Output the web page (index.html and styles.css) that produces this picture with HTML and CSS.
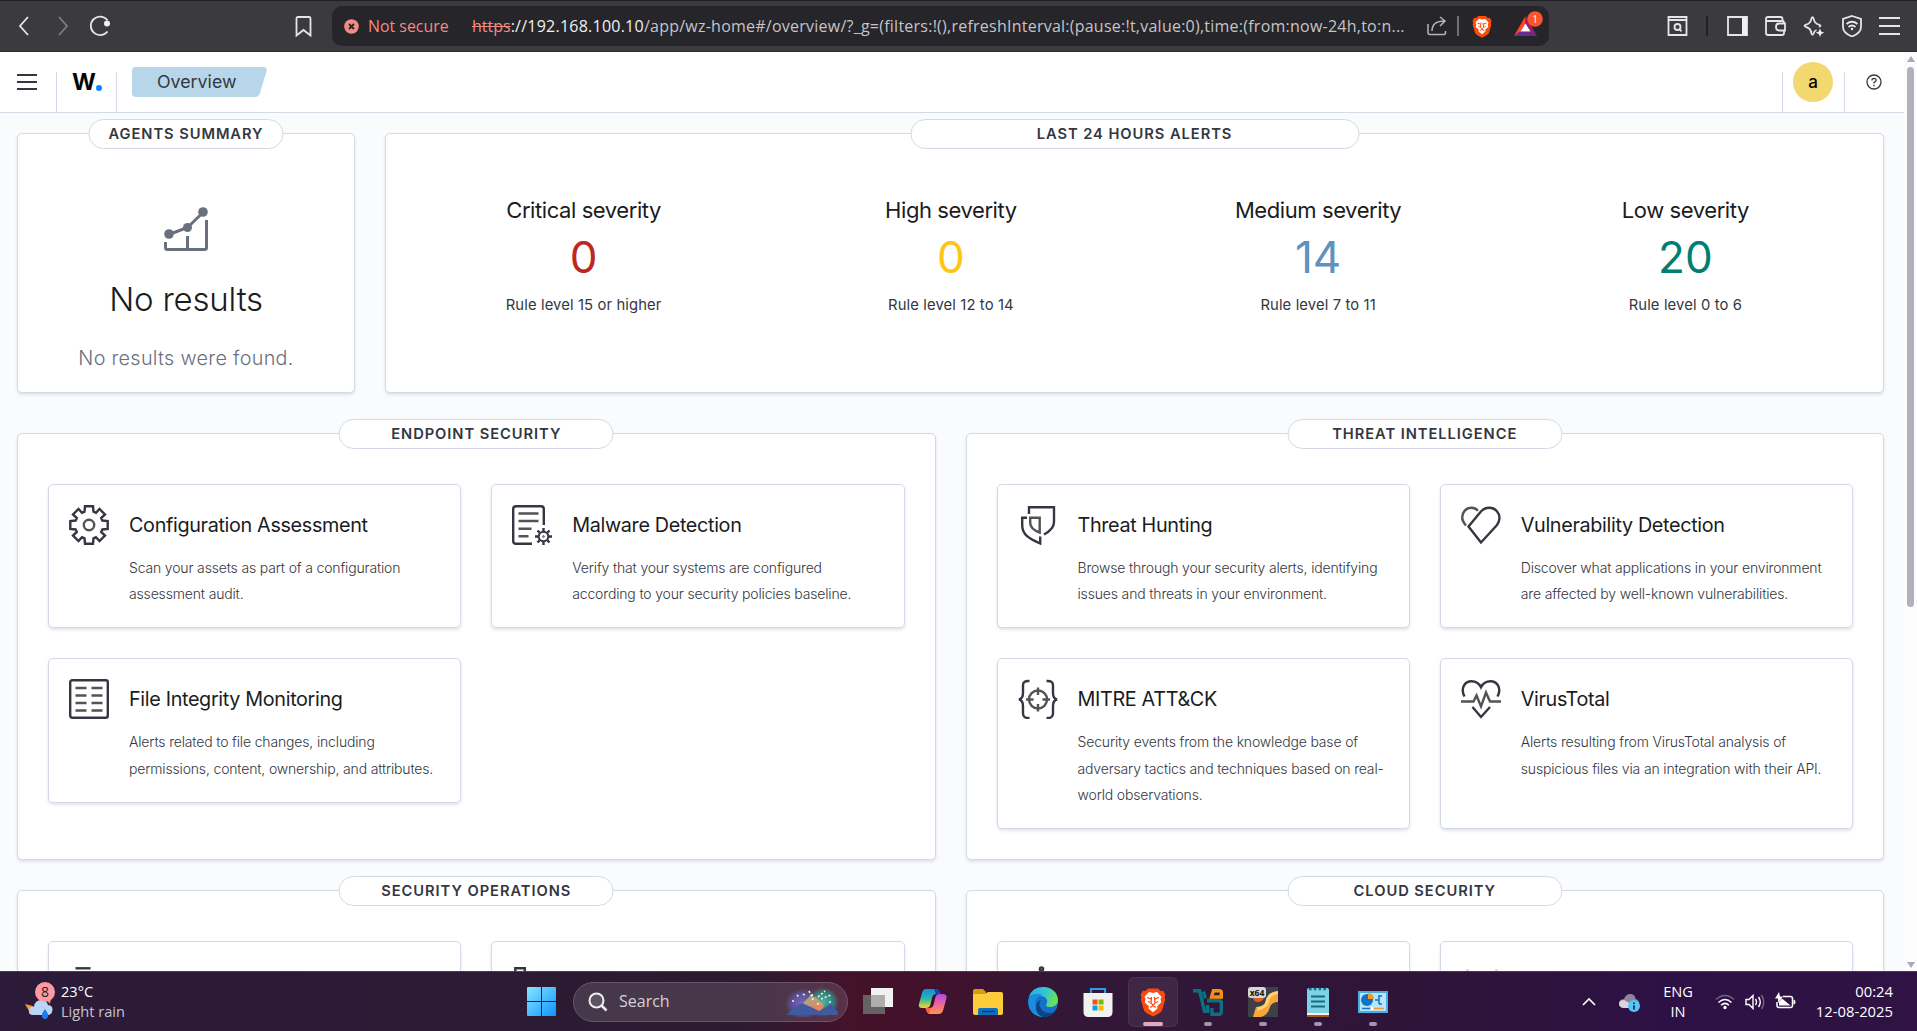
FILE: index.html
```html
<!DOCTYPE html>
<html lang="en">
<head>
<meta charset="utf-8">
<title>Overview</title>
<link rel="stylesheet" href="styles.css">
</head>
<body>
<svg class="defs" aria-hidden="true">
  <symbol id="brave" viewBox="0 0 26 29">
    <path fill="#fb4b0c" d="M8 1h10l2.500 2.600 2.700-.4L25.300 7l-.7 3 .6 2-3 10.300c-.6 1.800-2 2.700-3.400 3.700L13 29l-5.800-3C5.800 25 4.400 24 3.800 22.300L.8 12l.6-2-.7-3 2.100-3.800 2.700.4z"/>
    <path fill="#fff" d="M9 4.500l4 1 4-1 4.500 4.800-1 2.500.8 3-4.100 4 .3 2.200-4.500 3.700L8.500 21l.3-2.200-4.100-4 .8-3-1-2.500z"/>
    <path fill="none" stroke="#fb4b0c" stroke-width="1.300" d="M7 10l4 1.400M19 10l-4 1.400M11.500 9.500L11 16l2 1.200 2-1.200-.5-6.500M8 14l2 1M18 14l-2 1M10 20l3-1.800 3 1.800"/>
  </symbol>
</svg>

<header class="toolbar">
  <svg class="tb back" width="12" height="20" viewBox="0 0 12 20"><path d="M10 1L2 10l8 9"/></svg>
  <svg class="tb fwd" width="12" height="20" viewBox="0 0 12 20"><path d="M2 1l8 9-8 9"/></svg>
  <svg class="tb reload" width="23" height="22" viewBox="0 0 23 22"><path d="M18.500 16.500A9.300 9.300 0 1 1 18.500 5.200"/><circle cx="18" cy="8.500" r="3" class="solid"/></svg>
  <svg class="tb mark" width="17" height="21" viewBox="0 0 17 21"><path d="M1.500 19.500V2.500q0-1.500 1.500-1.500h11q1.500 0 1.500 1.500v17L8.500 14z"/></svg>
  <div class="urlbar">
    <svg class="warn" width="15" height="15" viewBox="0 0 15 15"><circle cx="7.500" cy="7.500" r="7.300" fill="#f28b82"/><path d="M5 5l5 5M10 5l-5 5" stroke="#26252a" stroke-width="1.800"/></svg>
    <span class="insecure">Not secure</span>
    <span class="url"><s>https</s>://192.168.100.10<span class="path">/app/wz-home#/overview/?_g=(filters:!(),refreshInterval:(pause:!t,value:0),time:(from:now-24h,to:n...</span></span>
    <svg class="tb share" width="20" height="20" viewBox="0 0 20 20"><path d="M1 8v8.500q0 2 2 2h14q1.500 0 1.500-2V15M5 15C5 8 9 5 17.500 5M13 1l5 4-5 5"/></svg>
    <i class="sep"></i>
    <svg class="lion" width="20" height="23"><use href="#brave"/></svg>
    <svg class="bat" width="32" height="26" viewBox="0 0 32 26"><path fill="#ff4724" d="M11.500 5L0 25l7-4.500 4.500-7z"/><path fill="#9e1f63" d="M11.500 5L23 25l-7-4.500-4.500-7z"/><path fill="#662d91" d="M0 25h23l-6-4.500H6z"/><path fill="#fff" d="M11.500 12.500l5 8h-10z"/><circle cx="21" cy="8" r="7.800" fill="#fb542b"/><text x="21" y="11.500" fill="#fff" text-anchor="middle" font-size="10">1</text></svg>
  </div>
  <div class="tools">
    <svg class="tb" width="21" height="20" viewBox="0 0 21 20"><path d="M1.500 1h18v18h-18zM1.500 4h18"/><circle cx="10.500" cy="11" r="3"/><path d="M12.500 13l2 2.300"/></svg>
    <i class="sep dark"></i>
    <svg class="tb" width="21" height="20" viewBox="0 0 21 20"><path d="M1 1h19v18H1z"/><path class="solid" d="M15 1h5v18h-5z"/></svg>
    <svg class="tb" width="21" height="20" viewBox="0 0 21 20"><path d="M17.500 5V3q0-2-2-2H3Q1 1 1 3v14q0 2 2 2h14q2 0 2-2v-2M1 5h16.500q1.500 0 1.500 2M20 7.500h-6q-3 0-3 3.500t3 3.500h6z"/></svg>
    <svg class="tb" width="22" height="21" viewBox="0 0 22 21"><path d="M13.500 14Q11 15 10.600 17.500 9.500 20 8.400 17.500 7.800 12 3 11 0 9.800 3 8.600 7.800 7.500 8.400 2.500 9.500 0 10.600 2.500 11.300 7.500 16 8.600 19 9.800 16 11"/><path class="solid" d="M17 12.500l1.200 3 3 1.200-3 1.200-1.200 3-1.200-3-3-1.200 3-1.200z"/></svg>
    <svg class="tb" width="20" height="22" viewBox="0 0 20 22"><path d="M10 1l9 3v8c0 5-4 7.500-9 9.500-5-2-9-4.500-9-9.500V4zM4.500 9q5.500-4.500 11 0M6.500 12q3.500-3 7 0"/><circle class="solid" cx="10" cy="14" r="1.200"/></svg>
    <svg class="tb" width="21" height="18" viewBox="0 0 21 18"><path d="M0 1h21M0 9h21M0 17h21"/></svg>
  </div>
</header>

<div class="viewport">
  <div class="app">
    <nav class="nav">
      <button class="burger"><i></i><i></i><i></i></button>
      <div class="logo">W<b></b></div>
      <div class="crumb"><svg width="135" height="30" viewBox="0 0 135 30"><path fill="#b8d6e9" d="M4 0h127q4.500 0 3.500 4l-6.500 22q-1.200 4-5 4H4q-4 0-4-4V4q0-4 4-4z"/></svg><span>Overview</span></div>
      <div class="user"><span class="avatar">a</span></div>
      <div class="help"><svg width="16" height="16" viewBox="0 0 16 16"><circle cx="8" cy="8" r="7"/><path d="M5.900 6.500Q6 4.300 8 4.300t2.100 1.900Q10.100 7.300 8 8.300v1.300M8 10.800v1.400"/></svg></div>
    </nav>

    <main class="content">
      <div class="row summary">
        <section class="panel agents">
          <h2 class="pill">AGENTS SUMMARY</h2>
          <svg class="chart" width="44" height="44" viewBox="0 0 44 44"><path d="M5 27.500L23.500 20.500 39.500 5M1.500 35v5.500q0 2 2 2h37q2 0 2-2V13M23.500 29v13"/><circle cx="5" cy="27" r="4.800"/><circle cx="23.500" cy="20.500" r="4.500"/><circle cx="39" cy="5" r="4.800"/></svg>
          <p class="empty-title">No results</p>
          <p class="empty-text">No results were found.</p>
        </section>
        <section class="panel alerts">
          <h2 class="pill wide">LAST 24 HOURS ALERTS</h2>
          <div class="stat"><p>Critical severity</p><strong class="critical">0</strong><small>Rule level 15 or higher</small></div>
          <div class="stat"><p>High severity</p><strong class="high">0</strong><small>Rule level 12 to 14</small></div>
          <div class="stat"><p>Medium severity</p><strong class="medium">14</strong><small>Rule level 7 to 11</small></div>
          <div class="stat"><p>Low severity</p><strong class="low">20</strong><small>Rule level 0 to 6</small></div>
        </section>
      </div>

      <div class="row halves">
        <section class="panel group">
          <h2 class="pill wide">ENDPOINT SECURITY</h2>
          <article class="card">
            <svg class="ico" viewBox="0 0 40 40"><path d="M16 1.300H24L24.500 6.600 27 7.800 30.500 4 36 9.500 32.200 13 33.400 15.500 38.700 16V24L33.400 24.500 32.200 27 36 30.500 30.500 36 27 32.200 24.500 33.400 24 38.700H16L15.500 33.400 13 32.200 9.500 36 4 30.500 7.800 27 6.600 24.500 1.300 24V16L6.600 15.500 7.800 13 4 9.500 9.500 4 13 7.800 15.500 6.600z"/><circle cx="20" cy="20" r="5.200" class="alt"/></svg>
            <div><h3>Configuration Assessment</h3><p>Scan your assets as part of a configuration<br>assessment audit.</p></div>
          </article>
          <article class="card">
            <svg class="ico" viewBox="0 0 40 40"><path d="M20 38.800H4q-2.800 0-2.800-2.800V4Q1.200 1.200 4 1.200h25q2.800 0 2.800 2.800V20"/><path class="alt" d="M6.500 8.500h20M6.500 16h20M6.500 23.700h13M6.500 31.200h10"/><circle cx="31.500" cy="31.500" r="4.800" stroke-width="2"/><circle cx="31.500" cy="31.500" r=".8" stroke-width="1"/><path d="M31.500 23v3M31.500 37v3M23 31.500h3M37 31.500h3M25.500 25.500l2.100 2.100M35.400 35.400l2.100 2.100M25.500 37.500l2.100-2.100M35.400 27.600l2.100-2.100"/></svg>
            <div><h3>Malware Detection</h3><p>Verify that your systems are configured<br>according to your security policies baseline.</p></div>
          </article>
          <article class="card">
            <svg class="ico" viewBox="0 0 40 40"><rect x="1.200" y="1.200" width="37.600" height="37.600" rx="2"/><path class="alt" d="M6.500 9h11M22.500 9h11M6.500 16.500h11M22.500 16.500h11M6.500 24h11M22.500 24h11M6.500 31.500h11M22.500 31.500h11"/></svg>
            <div><h3>File Integrity Monitoring</h3><p>Alerts related to file changes, including<br>permissions, content, ownership, and attributes.</p></div>
          </article>
        </section>
        <section class="panel group">
          <h2 class="pill wide">THREAT INTELLIGENCE</h2>
          <article class="card">
            <svg class="ico" viewBox="0 0 40 40"><path d="M11 9V2.200H36V17q0 7-10 12.500M9 12.700H4.200V20c0 10 7 13.500 18 18.500v-7"/><path class="alt" d="M12.200 12.700h9.500V27.500Q12.200 24 12.200 18z"/></svg>
            <div><h3>Threat Hunting</h3><p>Browse through your security alerts, identifying<br>issues and threats in your environment.</p></div>
          </article>
          <article class="card">
            <svg class="ico" viewBox="0 0 40 40"><path d="M20 37.500L7.500 21.500 19.500 7C22 4 25 2.800 28.500 2.800 34.500 2.800 38.500 8 38.500 13c0 2.500-.8 4.500-2.500 7z"/><path class="alt" d="M5 20.500C2 17 1.200 15 1.200 12.500 1.200 7 5 2.800 10.500 2.800q4 0 6.500 3"/></svg>
            <div><h3>Vulnerability Detection</h3><p>Discover what applications in your environment<br>are affected by well-known vulnerabilities.</p></div>
          </article>
          <article class="card">
            <svg class="ico" viewBox="0 0 40 40"><path d="M11.500 2Q5 1.500 5 6v8q0 5.500-4 6.500 4 1 4 6.500v7.500q0 5 6.500 4.500M28.500 2Q35 1.500 35 6v8q0 5.500 4 6.500-4 1-4 6.500v7.500q0 5-6.500 4.500"/><circle class="alt" cx="20" cy="20.500" r="9"/><path class="alt" d="M20 8.500v7.500M20 25v7.500M8 20.500h7.500M24.500 20.500H32"/></svg>
            <div><h3>MITRE ATT&amp;CK</h3><p>Security events from the knowledge base of<br>adversary tactics and techniques based on real-<br>world observations.</p></div>
          </article>
          <article class="card">
            <svg class="ico" viewBox="0 0 40 40"><path d="M3.500 17.500C-1 9 4 2.200 10.500 2.200c5 0 7.500 2 9.500 6 2-4 4.500-6 9.500-6C36 2.200 41 9 36.500 17.500M11.500 28l8.500 10 9-10"/><path class="alt" d="M0 22.500h12.500l3-6 4.500 11 5-14 4 9H40"/></svg>
            <div><h3>VirusTotal</h3><p>Alerts resulting from VirusTotal analysis of<br>suspicious files via an integration with their API.</p></div>
          </article>
        </section>
      </div>

      <div class="row halves next">
        <section class="panel group">
          <h2 class="pill wide">SECURITY OPERATIONS</h2>
          <article class="card"><svg class="ico" viewBox="0 0 40 40"><path d="M6.500 6.300h15"/></svg></article>
          <article class="card"><svg class="ico" viewBox="0 0 40 40"><path d="M3.300 14V6.300h9.500V14"/></svg></article>
        </section>
        <section class="panel group">
          <h2 class="pill wide">CLOUD SECURITY</h2>
          <article class="card"><svg class="ico" viewBox="0 0 40 40"><circle cx="23.500" cy="7" r="1.600"/><path d="M23.500 9v6"/></svg></article>
          <article class="card"><svg class="ico faint" viewBox="0 0 40 40"><path d="M5 8.500h3M34 8.500h3"/></svg></article>
        </section>
      </div>
    </main>
  </div>
  <div class="scroll"><i class="up"></i><i class="thumb"></i><i class="down"></i></div>
</div>

<footer class="taskbar">
  <div class="weather">
    <svg width="34" height="38" viewBox="0 0 34 38"><path fill="#f39c2d" d="M0 22l8 2-4 5zM20 16h6l-1 6z"/><path fill="#b9d4f7" d="M8 33q-5 0-4-5 1-3.500 5-3.500 1-6.500 7-6.500 5.500 0 7 5 5 .5 4.500 5-.5 5-5 5z"/><path fill="#1f7bea" d="M20 27q4 5 3 8-3 4.500-6 0-1-3 3-8z"/><circle cx="20" cy="10" r="10" fill="#ff99a4"/><text x="20" y="15" text-anchor="middle" font-size="14" fill="#222">8</text></svg>
    <div>23°C<br><span>Light rain</span></div>
  </div>
  <svg class="win" width="29" height="29" viewBox="0 0 29 29"><defs><linearGradient id="wg" x2="1" y2="1"><stop stop-color="#8ae4ff"/><stop offset="1" stop-color="#0a95ff"/></linearGradient></defs><path fill="url(#wg)" d="M1 0h13v14H0V1q0-1 1-1zM15 0h13q1 0 1 1v13H15zM0 15h14v14H1q-1 0-1-1zM15 15h14v13q0 1-1 1H15z"/></svg>
  <div class="search">
    <svg width="20" height="20" viewBox="0 0 20 20"><circle cx="8.500" cy="8.500" r="7" fill="#ffffff22" stroke="#eee" stroke-width="2"/><path d="M13.500 13.500l5 5" stroke="#eee" stroke-width="2.500"/></svg>
    <span>Search</span>
    <svg class="fw" width="54" height="30" viewBox="0 0 54 30"><defs><radialGradient id="f1"><stop stop-color="#7f68b8"/><stop offset=".6" stop-color="#5b529c"/><stop offset="1" stop-color="#5b529c" stop-opacity="0"/></radialGradient><radialGradient id="f2"><stop stop-color="#4bb3a0"/><stop offset=".6" stop-color="#318481"/><stop offset="1" stop-color="#318481" stop-opacity="0"/></radialGradient></defs><ellipse cx="18" cy="17" rx="18" ry="16" fill="url(#f1)"/><ellipse cx="38" cy="15" rx="16" ry="15" fill="url(#f2)"/><path fill="#b99c7e" d="M8 23l9-6 8-8 6 1 8 8-5 6z"/><path fill="#ee8254" d="M25 19l14 0-5 9z"/><path d="M24 4l3 6M18 7l3 2M33 10l7-6M36 12l10-4M28 13l-1-6M32 17l4-1M12 8l2 2M7 14h3M44 15h3" stroke="#fff1cf" stroke-width="1.700" stroke-dasharray="2 2"/><path fill="#3f5a9d" d="M1 28l8-7 8-5 9 4 8 4 12-7 7 8v3z"/></svg>
  </div>
  <div class="apps">
    <span class="app-btn"><svg width="30" height="30" viewBox="0 0 30 30"><path fill="#666163" d="M0 8h22v19H0z"/><path fill="#f2f2f2" d="M8 1h22v19H8z"/><path fill="#b0adae" d="M8 8h14v12H8z"/></svg></span>
    <span class="app-btn"><svg width="30" height="30" viewBox="0 0 30 30"><defs><linearGradient id="c1" y2="1" x2="0"><stop stop-color="#168be8"/><stop offset=".5" stop-color="#28b8a8"/><stop offset="1" stop-color="#ffd12f"/></linearGradient><linearGradient id="c2" y2="1" x2="0"><stop stop-color="#a44bea"/><stop offset=".5" stop-color="#f0659b"/><stop offset="1" stop-color="#ff9350"/></linearGradient></defs><path fill="url(#c1)" d="M8 2h10q3 0 4 5h-4q-3 0-4 4l-2 8q-1 2-4 2H4q-4 0-3-4L4 6q1-4 4-4z"/><path fill="url(#c2)" d="M21 7h4q4 0 3.500 4l-3 11q-1 5-5 5H12q-3 0-4.500-6h4q3 0 4-3l2-8q1-3 3.500-3z"/><path fill="#123fba" d="M16 2h2q3 0 4 5h-4z"/><path fill="#ff5a32" d="M7.500 21h5l-1.500 6q-2-1-3.500-6z"/></svg></span>
    <span class="app-btn"><svg width="30" height="30" viewBox="0 0 30 30"><path fill="#dc9a08" d="M0 4q0-2 2-2h8l3 3v4H0z"/><path fill="#fdcc3b" d="M0 7h12l3-2h13q2 0 2 2v19q0 2-2 2H2q-2 0-2-2z"/><path fill="#0f6fc0" d="M5 28v-5q0-2 2-2h16q2 0 2 2v5z"/><path stroke="#073f7d" stroke-width="1.500" d="M9 24.500h13"/></svg></span>
    <span class="app-btn"><svg width="30" height="30" viewBox="0 0 30 30"><defs><linearGradient id="e1" x2="1" y2=".3"><stop stop-color="#2aa9ea"/><stop offset=".6" stop-color="#33c7cf"/><stop offset="1" stop-color="#68e05a"/></linearGradient></defs><circle cx="15" cy="15" r="15" fill="#1470c8"/><path fill="url(#e1)" d="M1 10Q4 0 15 0c9 0 15 6 15 13 0 5-4 7-8 7-5 0-4-2-3-4 1-4-2-7-6-7-5 0-9 1-12 1z"/><path fill="#1b8ddf" d="M1 10c3-4 11-4 14-2-6 1-9 6-7 12 1 5 4 8 7 10C5 30-2 21 1 10z"/><path fill="#0c4386" d="M13 13c-4 4 0 13 8 13 4 0 6-1 7-3-3 6-8 7-13 7-9-3-9-15-2-17z"/></svg></span>
    <span class="app-btn"><svg width="30" height="30" viewBox="0 0 30 30"><path fill="none" stroke="#2d9be2" stroke-width="2.200" d="M8 7V2h14v5"/><path fill="#f1f1f1" d="M.5 6h29v19q0 5-5 5h-19q-5 0-5-5z"/><path fill="#f25022" d="M9.500 12.500h5v5h-5z"/><path fill="#7fba00" d="M15.500 12.500h5v5h-5z"/><path fill="#00a4ef" d="M9.500 18.500h5v5h-5z"/><path fill="#ffb900" d="M15.500 18.500h5v5h-5z"/></svg></span>
    <span class="app-btn active"><svg width="26" height="30"><use href="#brave"/></svg></span>
    <span class="app-btn run"><svg width="30" height="28" viewBox="0 0 30 28" fill="none" stroke-width="3.400"><path stroke="#0b7082" d="M0 2.700h6.500l5 20.500h3.200V17M10.500 3.500l2 7M14 12.700h12q2.300 0 2.300 2v9.500q0 2-2.300 2H19V20"/><path stroke="#f29111" d="M20.500 2.700h5.800q2 0 2 2V9H18.500z"/></svg></span>
    <span class="app-btn run"><svg width="30" height="30" viewBox="0 0 30 30"><path fill="#3d4046" d="M0 0h30v30H0z"/><path fill="#f7a63b" d="M30 4v11q-6 0-8 5-2 8-9 10H5l3-10q9 0 10-7 2-8 12-9z"/><path fill="#ffd375" d="M30 4v3q-8 1-9 8-1 6-12 9l1-4q7 0 8-7 2-8 12-9z"/><path fill="#e85d1e" d="M5 11h11q-2 4-6 4t-5-4z"/><rect width="18" height="11" rx="3" fill="#d6d6d6"/><text x="9" y="9" font-size="8.500" font-weight="700" text-anchor="middle" fill="#111">x64</text></svg></span>
    <span class="app-btn run"><svg width="22" height="30" viewBox="0 0 22 30"><path fill="#7fd2e3" d="M0 3q0-2 2-2h18q2 0 2 2v23H0z"/><path fill="#f4f4f4" d="M0 26h22v2H0z"/><path fill="#a4581c" d="M0 28h22v2H0z"/><path stroke="#136c86" stroke-width="2" d="M4 9.500h14M4 14.500h14M4 19.500h14"/><path stroke="#136c86" stroke-width="2.500" stroke-dasharray="2.500 2.300" d="M2 2h19"/></svg></span>
    <span class="app-btn run"><svg width="30" height="24" viewBox="0 0 30 24"><path fill="#4aaee5" d="M0 1h30v22H0z"/><path fill="#b5e6fb" d="M2 3h26v18H2z"/><circle cx="9" cy="10" r="6" fill="#1272c4"/><path fill="#f29b27" d="M10 9V3q6 0 6 6z"/><path stroke="#1272c4" stroke-width="1.500" d="M17 10h4M21 6h3M21 14h3M21 5v9M4 18.500h9"/><path stroke="#f29b27" stroke-width="1.500" d="M15 18.500h11"/><circle cx="14" cy="18.500" r="1.700" fill="#fff"/></svg></span>
  </div>
  <div class="tray">
    <svg width="14" height="9" viewBox="0 0 14 9"><path d="M1 8l6-6 6 6" fill="none" stroke="#fff" stroke-width="1.700"/></svg>
    <svg class="cloud" width="21" height="18" viewBox="0 0 21 18"><path fill="#8d8499" d="M4 13q-4-1-4-4 1-4 5-4 2-5 6-5 5 0 5.500 5Q21 6 20 11z"/><path fill="#d8d5dd" d="M0 10q0-4 5-4l7 4v4H4q-4-1-4-4z"/><circle cx="15" cy="12" r="6" fill="#55c5f7"/><path stroke="#123" stroke-width="1.600" d="M15 8.500v1.500M15 11.200v4.300"/></svg>
    <div class="lang">ENG<br>IN</div>
    <svg class="wifi" width="20" height="16" viewBox="0 0 20 16" fill="none" stroke="#fff" stroke-width="1.500"><path d="M1 5.500q9-8 18 0" opacity=".35"/><path d="M3.500 8.500q6.500-6 13 0M6 11.200q4-3.700 8 0"/><circle cx="10" cy="13.500" r="1" fill="#fff"/></svg>
    <svg class="vol" width="20" height="16" viewBox="0 0 20 16" fill="none" stroke="#fff" stroke-width="1.400"><path d="M1 5.500h3l4-4v13l-4-4H1zM10.500 5q2 3 0 6M13.500 3q3.500 5 0 10"/><path d="M16.500 1q4.500 7 0 14" opacity=".35"/></svg>
    <svg class="batt" width="21" height="18" viewBox="0 0 21 18"><path d="M8 4.500h7.500q2 0 2 2v7q0 2-2 2H4q-2 0-2-2V10" fill="none" stroke="#fff" stroke-width="1.500"/><path fill="#fff" d="M18.500 7.500q2 0 2 2.500t-2 2.500zM4 13.500V10l3-3.500L15.500 13.500zM4 0L0 6.500h3v4.500l5-6.500H5z"/></svg>
    <div class="clock">00:24<br>12-08-2025</div>
  </div>
</footer>
</body>
</html>
```
FILE: styles.css
```css
* { box-sizing: border-box; }
body { margin: 0; height: 100vh; display: flex; flex-direction: column; overflow: hidden; background: #fafbfd; font-family: Inter, "Liberation Sans", sans-serif; color: #343741; }
h2, h3, p { margin: 0; }
svg { display: block; flex: none; }
.defs { position: absolute; width: 0; height: 0; }

/* browser toolbar */
.toolbar { height: 52px; flex: none; display: flex; align-items: center; background: #3b3a3f; border-top: 1px solid #1f1e25; border-bottom: 1px solid #2d2c31; font-family: "Open Sans", sans-serif; }
.tb { fill: none; stroke: #e6e6e8; stroke-width: 1.8; }
.tb .solid { fill: #f0f0f2; stroke: none; }
.back { margin-left: 18px; }
.fwd { margin-left: 27px; opacity: .4; }
.reload { margin-left: 20px; }
.mark { margin-left: 183px; }
.urlbar { margin-left: 20px; width: 1217px; height: 40px; border-radius: 10px; background: #26252a; display: flex; align-items: center; font-size: 16px; color: #f1f1f3; white-space: nowrap; }
.warn { margin-left: 12px; }
.insecure { width: 88px; margin-left: 9px; margin-right: 16px; color: #f28b82; font-size: 15.9px; }
.url { width: 955px; letter-spacing: .24px; overflow: hidden; }
.url s { color: #f28b82; letter-spacing: 0; }
.path { color: #c5c4c8; }
.share { stroke: #b5b5ba; stroke-width: 1.5; }
.sep { width: 2px; height: 20px; margin-left: 10px; background: #717076; }
.lion { margin-left: 13px; }
.bat { margin-left: 22px; margin-top: -4px; }
.tools { flex: 1; display: flex; align-items: center; justify-content: flex-end; gap: 17px; margin-right: 17px; }
.sep.dark { margin: 0 2px 0 1px; background: #222127; }

/* page viewport */
.viewport { flex: 1; min-height: 0; display: flex; overflow: hidden; }
.app { width: 1904px; display: flex; flex-direction: column; }
.nav { height: 61px; flex: none; display: flex; align-items: flex-end; background: #fff; border-bottom: 1px solid #d3dae6; }
.burger { width: 56px; height: 60px; border: 0; background: none; padding: 22px 0 0 17px; display: flex; flex-direction: column; gap: 5px; }
.burger i { width: 20px; height: 2px; background: #343741; }
.logo { width: 60px; height: 40px; border-left: 1px solid #d3dae6; padding-left: 15px; display: flex; font: 700 23px/20px Inter, sans-serif; color: #060606; }
.logo b { width: 6px; height: 6px; border-radius: 50%; background: #0f83ff; margin: 13px 0 0 0; }
.crumb { height: 40px; border-left: 1px solid #d3dae6; padding-left: 15px; display: flex; align-items: center; }
.crumb svg { margin-top: -20px; }
.crumb span { margin: -21px 0 0 -110px; font-size: 17.8px; line-height: 30px; color: #343741; }
.user { margin-left: auto; width: 63px; height: 40px; border: solid #d3dae6; border-width: 0 1px; padding: 0 10px; }
.avatar { display: block; width: 40px; height: 40px; margin-top: -10px; border-radius: 50%; background: #f1d86f; text-align: center; font-size: 17px; font-weight: 500; line-height: 40px; color: #000; }
.help { width: 59px; height: 40px; padding: 2px 0 0 21px; }
.help svg { fill: none; stroke: #343741; stroke-width: 1.3; }

.content { padding: 20px 20px 0 17px; }
.row { display: grid; column-gap: 30px; }
.summary { grid-template-columns: 338px 1fr; }
.halves { grid-template-columns: 1fr 1fr; margin-top: 40px; }
.halves.next { margin-top: 30px; }
.panel { position: relative; background: #fff; border: 1px solid #d3dae6; border-radius: 5px; box-shadow: 0 2px 3px rgba(100, 110, 160, .18); }
.pill { position: absolute; top: -15px; left: 50%; transform: translateX(-50%); height: 30px; padding: 0 19px; border: 1px solid #d3dae6; border-radius: 15px; background: #fff; font-size: 14.7px; line-height: 29px; font-weight: 600; letter-spacing: .94px; text-align: center; white-space: nowrap; color: #343741; }
.pill.wide { width: 30%; padding: 0; }

.agents { height: 260px; display: flex; flex-direction: column; align-items: center; padding-top: 73px; }
.chart { fill: none; stroke: #69707d; stroke-width: 3; }
.chart circle { fill: #69707d; stroke: none; }
.empty-title { margin-top: 28px; font-size: 33px; font-weight: 300; line-height: 40px; letter-spacing: -.2px; color: #1a1c21; }
.empty-text { margin-top: 24px; font-size: 19.8px; font-weight: 350; line-height: 30px; letter-spacing: .3px; color: #69707d; }
.alerts { display: flex; padding: 61px 14px 0; }
.stat { flex: 1; display: flex; flex-direction: column; align-items: center; }
.stat p { font-size: 22px; line-height: 30px; letter-spacing: -.42px; color: #1a1c21; }
.stat strong { font-size: 44px; font-weight: 400; line-height: 44px; margin-top: 10px; }
.stat small { font-size: 14.8px; line-height: 24px; margin-top: 14px; letter-spacing: .12px; }
.critical { color: #bd271e; }
.high { color: #fec514; }
.medium { color: #6092c0; }
.low { color: #017d73; }

.group { min-height: 427px; padding: 50px 30px 30px; display: grid; grid-template-columns: 1fr 1fr; gap: 30px; align-content: start; }
.card { min-height: 144px; padding: 20px; display: flex; gap: 20px; border: 1px solid #d3dae6; border-radius: 5px; background: #fff; box-shadow: 0 2px 3px rgba(100, 110, 160, .18); }
.ico { width: 40px; height: 40px; fill: none; stroke: #343741; stroke-width: 2.4; }
.ico .alt { stroke: #535353; }
.ico.faint { opacity: .2; }
.card h3 { font-size: 19.8px; font-weight: 400; line-height: 40px; letter-spacing: -.34px; color: #1a1c21; white-space: nowrap; }
.card p { margin-top: 10px; font-size: 14px; font-weight: 300; line-height: 26.2px; letter-spacing: -.16px; white-space: nowrap; }

.scroll { width: 13px; display: flex; flex-direction: column; align-items: center; padding: 4px 0 3px; background: #fcfcfd; }
.up, .down { border: 4px solid transparent; }
.up { border-top: 0; border-bottom: 6px solid #a9a9b7; }
.down { border-bottom: 0; border-top: 6px solid #a9a9b7; margin-top: auto; }
.thumb { width: 7px; height: 540px; margin-top: 5px; border-radius: 4px; background: #b1b1be; }

/* desktop taskbar */
.taskbar { height: 60px; flex: none; display: flex; align-items: center; border-top: 1px solid #493d50; background: linear-gradient(90deg, #2c1a3a 0, #2b1b32 30%, #2d1a31 39%, #42132b 44%, #43112b 48%, #321737 56%, #2e1438 75%, #2d1145 87%, #301344 100%); font-family: "Open Sans", sans-serif; color: #fff; font-size: 14.6px; line-height: 20px; }
.weather { width: 502px; padding-left: 25px; display: flex; gap: 2px; }
.weather div, .lang, .clock { margin-top: -2px; }
.weather svg { margin-top: -1px; }
.weather span { color: #c9c3cf; }
.win { margin-left: 25px; }
.search { width: 275px; height: 40px; margin-left: 17px; padding: 0 8px 0 14px; display: flex; align-items: center; border-radius: 20px; border: 1px solid #6a566a; background: rgba(255, 255, 255, .13); font-size: 16px; color: #d6d0d8; }
.search span { margin-left: 11px; margin-top: -1px; }
.fw { margin-left: auto; }
.apps { display: flex; gap: 5px; margin-left: 5px; }
.app-btn { position: relative; width: 50px; height: 50px; display: flex; align-items: center; justify-content: center; border-radius: 6px; }
.active { background: rgba(255, 255, 255, .07); border: 1px solid rgba(255, 255, 255, .06); }
.run::after, .active::after { content: ""; position: absolute; bottom: 1px; width: 8px; height: 4px; border-radius: 2px; background: #a195a8; }
.active::after { width: 20px; bottom: 0; background: #e2a9c4; }
.tray { margin-left: auto; margin-right: 24px; display: flex; align-items: center; }
.cloud { margin-left: 23px; margin-top: 2px; }
.lang { width: 30px; margin-left: 23px; text-align: center; }
.wifi { margin-left: 22px; }
.vol { margin-left: 10px; }
.batt { margin-left: 10px; margin-top: -2px; }
.clock { width: 97px; text-align: right; font-size: 14.8px; }
```
